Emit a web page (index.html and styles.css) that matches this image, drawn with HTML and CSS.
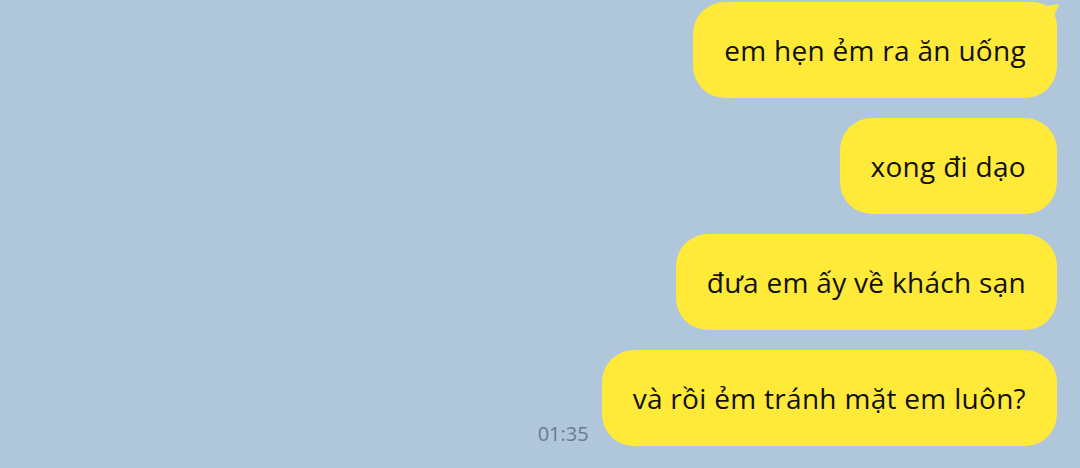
FILE: index.html
```html
<!DOCTYPE html>
<html lang="vi">
<head>
    <meta charset="UTF-8">
    <meta name="viewport" content="width=device-width, initial-scale=1.0">
    <title>Chat</title>
    <link rel="stylesheet" href="styles.css">
</head>
<body>
    <main class="chat">
        <div class="row">
            <div class="bubble first">
                em hẹn ẻm ra ăn uống
                <svg class="tail" width="30" height="30" viewBox="0 0 30 30">
                    <path d="M0 4 L26 0 Q22 8 20 18 L6 26 Z" fill="#ffea3a"/>
                </svg>
            </div>
        </div>
        <div class="row">
            <div class="bubble">xong đi dạo</div>
        </div>
        <div class="row">
            <div class="bubble">đưa em ấy về khách sạn</div>
        </div>
        <div class="row">
            <span class="time">01:35</span>
            <div class="bubble">và rồi ẻm tránh mặt em luôn?</div>
        </div>
    </main>
</body>
</html>
```

FILE: styles.css
```css
* {
    margin: 0;
    padding: 0;
    box-sizing: border-box;
}

body {
    background: #b0c6da;
    font-family: 'Open Sans', 'Noto Sans', sans-serif;
    height: 468px;
    overflow: hidden;
}

.chat {
    display: flex;
    flex-direction: column;
    align-items: flex-end;
    gap: 20px;
    padding: 2px 23px 0 0;
}

.row {
    display: flex;
    align-items: flex-end;
    gap: 13px;
}

.bubble {
    position: relative;
    height: 96px;
    display: flex;
    align-items: center;
    padding: 0 31px;
    background: #ffea3a;
    border-radius: 32px;
    color: #111;
    font-size: 28px;
    letter-spacing: 0.3px;
    white-space: nowrap;
}

.bubble.first {
    border-top-right-radius: 24px;
}

.tail {
    position: absolute;
    top: 2px;
    right: -6px;
}

.time {
    color: #6a7b8c;
    font-size: 20px;
    line-height: 1;
    margin-bottom: 2px;
}
```
